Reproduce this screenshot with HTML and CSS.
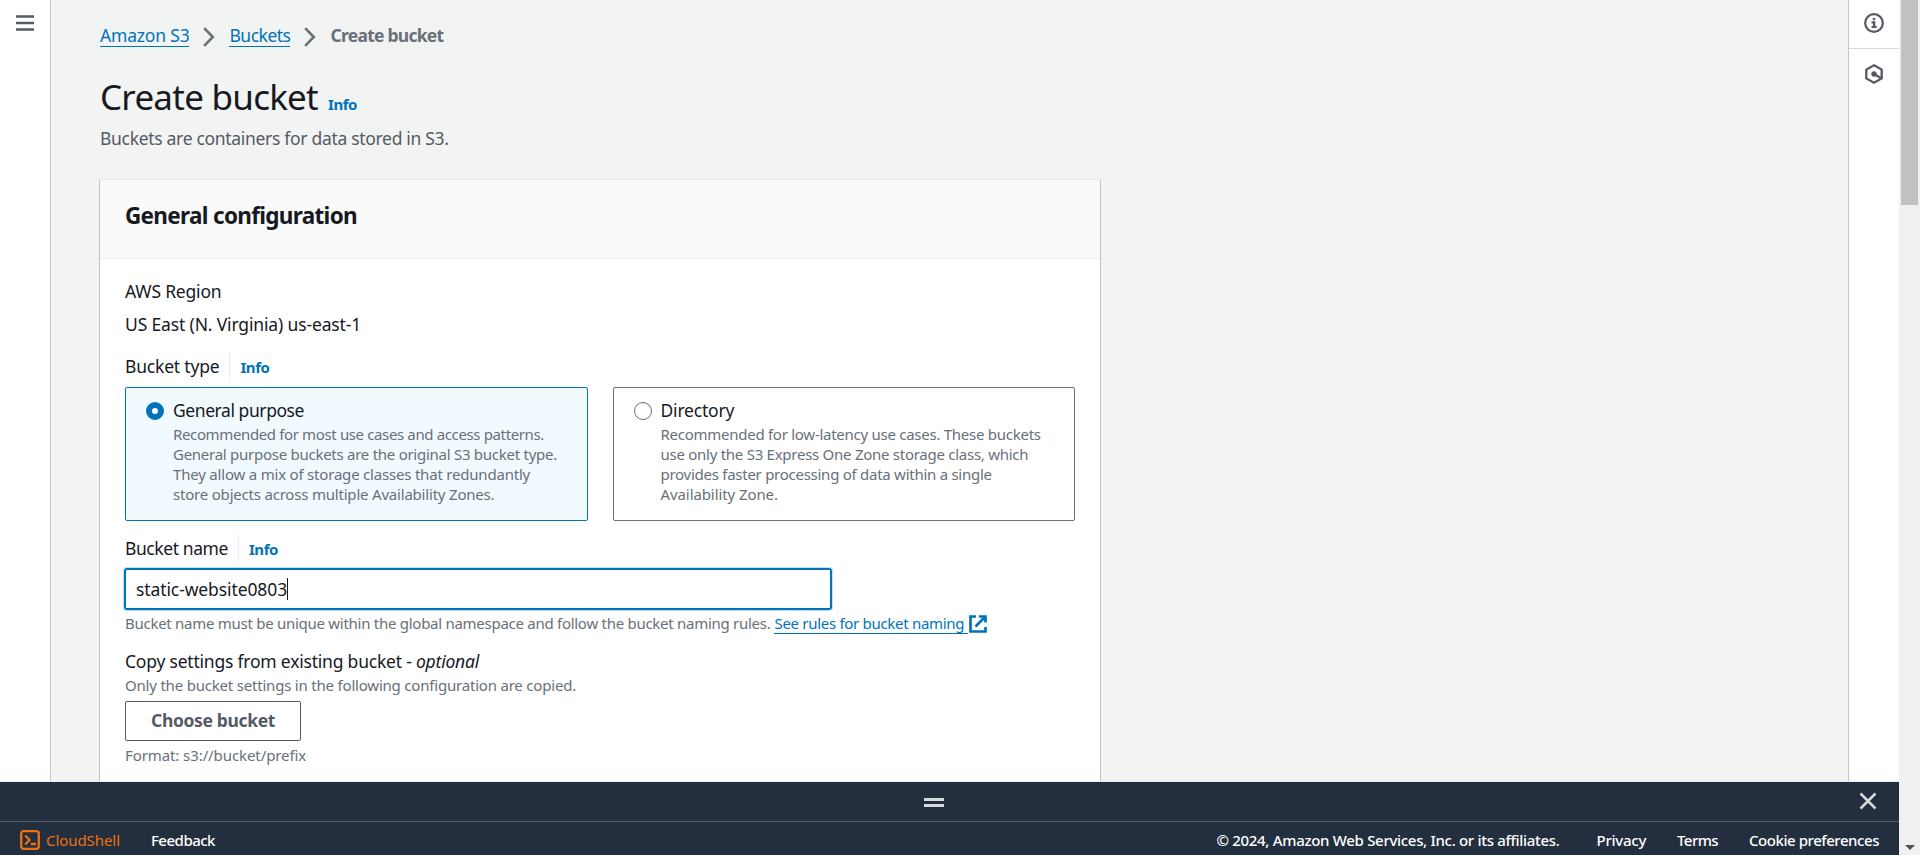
FILE: index.html
```html
<!DOCTYPE html>
<html lang="en">
<head>
<meta charset="utf-8">
<title>Create bucket</title>
<link rel="stylesheet" href="styles.css">
</head>
<body>
<div class="page">
  <div class="workspace">
    <aside class="nav-rail">
      <svg width="18" height="16" viewBox="0 0 18 16"><path d="M0 1.500h18M0 8h18M0 14.500h18" stroke="#545b64" stroke-width="2.400"/></svg>
    </aside>
    <main class="content">
      <nav class="breadcrumb">
        <a class="link">Amazon S3</a>
        <svg class="chevron" width="12" height="20" viewBox="0 0 12 20"><path d="M1.200 1.200L9.800 10l-8.600 8.800" fill="none" stroke="#687078" stroke-width="2.600"/></svg>
        <a class="link buckets">Buckets</a>
        <svg class="chevron" width="12" height="20" viewBox="0 0 12 20"><path d="M1.200 1.200L9.800 10l-8.600 8.800" fill="none" stroke="#687078" stroke-width="2.600"/></svg>
        <span class="current">Create bucket</span>
      </nav>
      <header class="title-row"><h1>Create bucket</h1><a class="info">Info</a></header>
      <p class="subtitle">Buckets are containers for data stored in S3.</p>
      <section class="card">
        <div class="card-head"><h2>General configuration</h2></div>
        <div class="card-body">
          <div class="label">AWS Region</div>
          <div class="label region">US East (N. Virginia) us-east-1</div>
          <div class="label-row type-row"><span class="label">Bucket type</span><a class="info divided">Info</a></div>
          <div class="tiles">
            <div class="tile selected">
              <i class="radio"></i>
              <div>
                <div class="label tile-title">General purpose</div>
                <p class="hint"><span class="snug">Recommended for most use cases and access patterns.</span><br>General purpose buckets are the original S3 bucket type.<br><span class="loose">They allow a mix of storage classes that redundantly<br>store objects across multiple Availability Zones.</span></p>
              </div>
            </div>
            <div class="tile">
              <i class="radio"></i>
              <div>
                <div class="label">Directory</div>
                <p class="hint">Recommended for low-latency use cases. These buckets<br>use only the S3 Express One Zone storage class, which<br>provides faster processing of data within a single<br><span class="looser">Availability Zone.</span></p>
              </div>
            </div>
          </div>
          <div class="label-row name-row"><span class="label bucket-name">Bucket name</span><a class="info divided">Info</a></div>
          <div class="input"><span>static-website0803</span><i class="caret"></i></div>
          <p class="hint name-hint"><span>Bucket name must be unique within the global namespace and follow the bucket naming rules.</span><a class="rules">See rules for bucket naming</a><svg width="18" height="18" viewBox="0 0 18 18"><path d="M7 1.500H1.500v15h15V12M10 1.500h6.500v6M16 2L6.500 11.500" fill="none" stroke="#0073bb" stroke-width="2.700"/></svg></p>
          <div class="label copy-label">Copy settings from existing bucket - <em>optional</em></div>
          <p class="hint loose">Only the bucket settings in the following configuration are copied.</p>
          <button class="choose">Choose bucket</button>
          <p class="hint looser">Format: s3://bucket/prefix</p>
        </div>
      </section>
    </main>
    <aside class="tool-rail">
      <div class="tool">
        <svg width="20" height="20" viewBox="0 0 20 20"><circle cx="10" cy="10" r="8.800" fill="none" stroke="#545b64" stroke-width="2.300"/><path d="M8.800 5h2.500v2.300H8.800zM7.500 8.300h3.800v4.600h1.400v2.100H7.500v-2.100h1.400v-2.500H7.500z" fill="#545b64"/></svg>
      </div>
      <div class="tool">
        <svg width="20" height="20" viewBox="0 0 20 20"><path d="M10 1.300l7.700 4.300v8.800L10 18.700l-7.700-4.300V5.600z" fill="none" stroke="#545b64" stroke-width="2.300"/><circle cx="10" cy="10" r="2.700" fill="#545b64"/><path d="M10 10l7.500 4.500" stroke="#545b64" stroke-width="2.400"/></svg>
      </div>
    </aside>
  </div>
  <div class="panel">
    <i class="handle"></i>
    <svg class="close" width="18" height="18" viewBox="0 0 18 18"><path d="M1.500 1.500l15 15M16.500 1.500l-15 15" stroke="#d5dbdb" stroke-width="2.500"/></svg>
  </div>
  <footer class="footer">
    <svg width="20" height="20" viewBox="0 0 20 20"><rect x="1.200" y="1.200" width="17.600" height="17.600" rx="2.500" fill="none" stroke="#ec7211" stroke-width="2.300"/><path d="M5.200 5.500L9.600 10l-4.400 4.500M10.800 14H16" fill="none" stroke="#ec7211" stroke-width="2.300"/></svg>
    <span class="cloudshell">CloudShell</span>
    <span class="feedback">Feedback</span>
    <span class="copyright">© 2024, Amazon Web Services, Inc. or its affiliates.</span>
    <span class="privacy">Privacy</span>
    <span class="terms">Terms</span>
    <span class="cookies">Cookie preferences</span>
  </footer>
</div>
<div class="scrollbar"><i class="thumb"></i><i class="arrow"></i></div>
</body>
</html>
```
FILE: styles.css
```css
* { box-sizing: border-box; }
body {
  margin: 0;
  display: flex;
  height: 855px;
  overflow: hidden;
  font-family: "Noto Sans", sans-serif;
  font-size: 17.5px;
  line-height: 28px;
  letter-spacing: -0.19px;
  color: #16191f;
  background: #f2f3f3;
  white-space: nowrap;
}
h1, h2, p { margin: 0; }
svg { display: block; flex: none; }

.page { width: 1899px; height: 855px; }
.workspace { display: flex; height: 782px; overflow: hidden; border-bottom: 1px solid #eaeded; }
.nav-rail { width: 51px; padding: 15px 16px; background: #fff; border-right: 1px solid #bfc8c9; }
.content { flex: 1; padding: 21px 0 0 48px; }

.breadcrumb { display: flex; padding-left: 1px; height: 28px; }
.chevron { margin: 6px 14px 0 14px; }
.link { height: 26px; color: #0073bb; border-bottom: 1px solid #0073bb; }
.buckets { letter-spacing: -0.5px; }
.current { font-weight: 700; letter-spacing: -0.74px; color: #687078; }

.title-row { display: flex; align-items: baseline; margin-top: 26px; padding-left: 1px; height: 44px; }
h1 { font-size: 35px; line-height: 44px; font-weight: 400; letter-spacing: -0.75px; }
.info { padding-top: 1px; font-size: 15px; line-height: 28px; font-weight: 700; letter-spacing: -0.44px; color: #0073bb; }
.title-row .info { margin-left: 10px; }
.subtitle { margin-top: 5px; padding-left: 1px; letter-spacing: -0.31px; color: #545b64; }

.card { width: 1002px; height: 640px; margin-top: 27px; background: #fff; border: 1px solid #bfc8c9; border-top-color: #e6eaea; }
.card-head { height: 79px; padding: 22px 25px; background: #fafafa; border-bottom: 1px solid #eaeded; }
h2 { font-size: 22.5px; line-height: 28px; font-weight: 700; letter-spacing: -0.68px; }
.card-body { padding: 18px 25px 0; }
.region { margin-top: 5px; letter-spacing: -0.15px; }
.label-row { display: flex; height: 28px; }
.type-row { margin-top: 14px; }
.divided { margin-left: 10px; padding-left: 10px; border-left: 1px solid #eaeded; }

.tiles { display: flex; gap: 25px; margin-top: 7px; }
.tile { display: flex; flex: 1; height: 134px; padding: 8px 20px; border: 1px solid #687078; border-radius: 2px; }
.tile.selected { border-color: #0073bb; background: #f1faff; }
.radio { flex: none; width: 18px; height: 18px; margin: 6px 9px 0 0; border: 1px solid #687078; border-radius: 50%; background: #fff; }
.selected .radio { border: 6px solid #0073bb; }
.tile-title { letter-spacing: -0.43px; }
.hint { font-size: 15px; line-height: 20px; letter-spacing: -0.265px; color: #687078; }
.snug { letter-spacing: -0.367px; }
.loose { letter-spacing: -0.2px; }
.looser { letter-spacing: -0.09px; }

.name-row { margin-top: 13px; }
.bucket-name { letter-spacing: -0.42px; }
.input { display: flex; align-items: center; width: 708px; height: 42px; margin: 6px 0 0 -1px; padding: 0 0 1px 10px; border: 2px solid #0073bb; border-radius: 3px; box-shadow: 0 0 0 1px #c5dfef; letter-spacing: -0.1px; }
.caret { width: 1px; height: 22px; background: #16191f; }
.name-hint { display: flex; margin-top: 3px; letter-spacing: -0.273px; }
.rules { width: 194px; height: 21px; margin-left: 4px; letter-spacing: -0.3px; color: #0073bb; border-bottom: 1px solid #0073bb; }
.name-hint svg { margin: 2px 0 0 1px; }
.copy-label { margin-top: 13px; letter-spacing: -0.21px; }
.choose { display: block; width: 176px; height: 40px; margin: 6px 0 4px; padding: 0 0 3px; border: 1px solid #545b64; border-radius: 2px; background: #fff; font: 700 17.5px/26px "Noto Sans", sans-serif; letter-spacing: -0.36px; color: #545b64; }

.tool-rail { width: 51px; background: #fff; border-left: 1px solid #bfc8c9; }
.tool { display: flex; justify-content: center; padding-top: 13px; height: 49px; border-bottom: 1px solid #d5dbdb; }
.tool + .tool { padding-top: 15px; border: 0; }

.panel { display: flex; align-items: flex-start; height: 39px; padding: 10px 22px 0 924px; background: #232f3e; }
.handle { width: 20px; height: 9px; margin-top: 6px; border: solid #d5dbdb; border-width: 3px 0; }
.close { margin-left: auto; }
.footer { display: flex; height: 34px; padding: 8px 20px 0; border-top: 1px solid #545b64; background: #232f3e; color: #fff; font-size: 15px; line-height: 20px; font-weight: 500; }
.cloudshell { margin-left: 6px; color: #ec7211; font-weight: 400; letter-spacing: -0.07px; }
.feedback { margin-left: 31px; letter-spacing: -0.5px; }
.copyright { margin-left: auto; letter-spacing: -0.31px; }
.privacy { margin-left: 37px; letter-spacing: -0.26px; }
.terms { margin-left: 31px; letter-spacing: -0.57px; }
.cookies { margin-left: 31px; letter-spacing: -0.45px; }

.scrollbar { display: flex; flex-direction: column; justify-content: space-between; align-items: center; width: 21px; height: 855px; padding-bottom: 5px; background: #f0f0f0; }
.thumb { width: 17px; height: 205px; background: #c1c1c1; }
.arrow { border: 5px solid transparent; border-top-color: #505050; border-bottom: 0; }
.footer svg { margin-top: 0; }
```
